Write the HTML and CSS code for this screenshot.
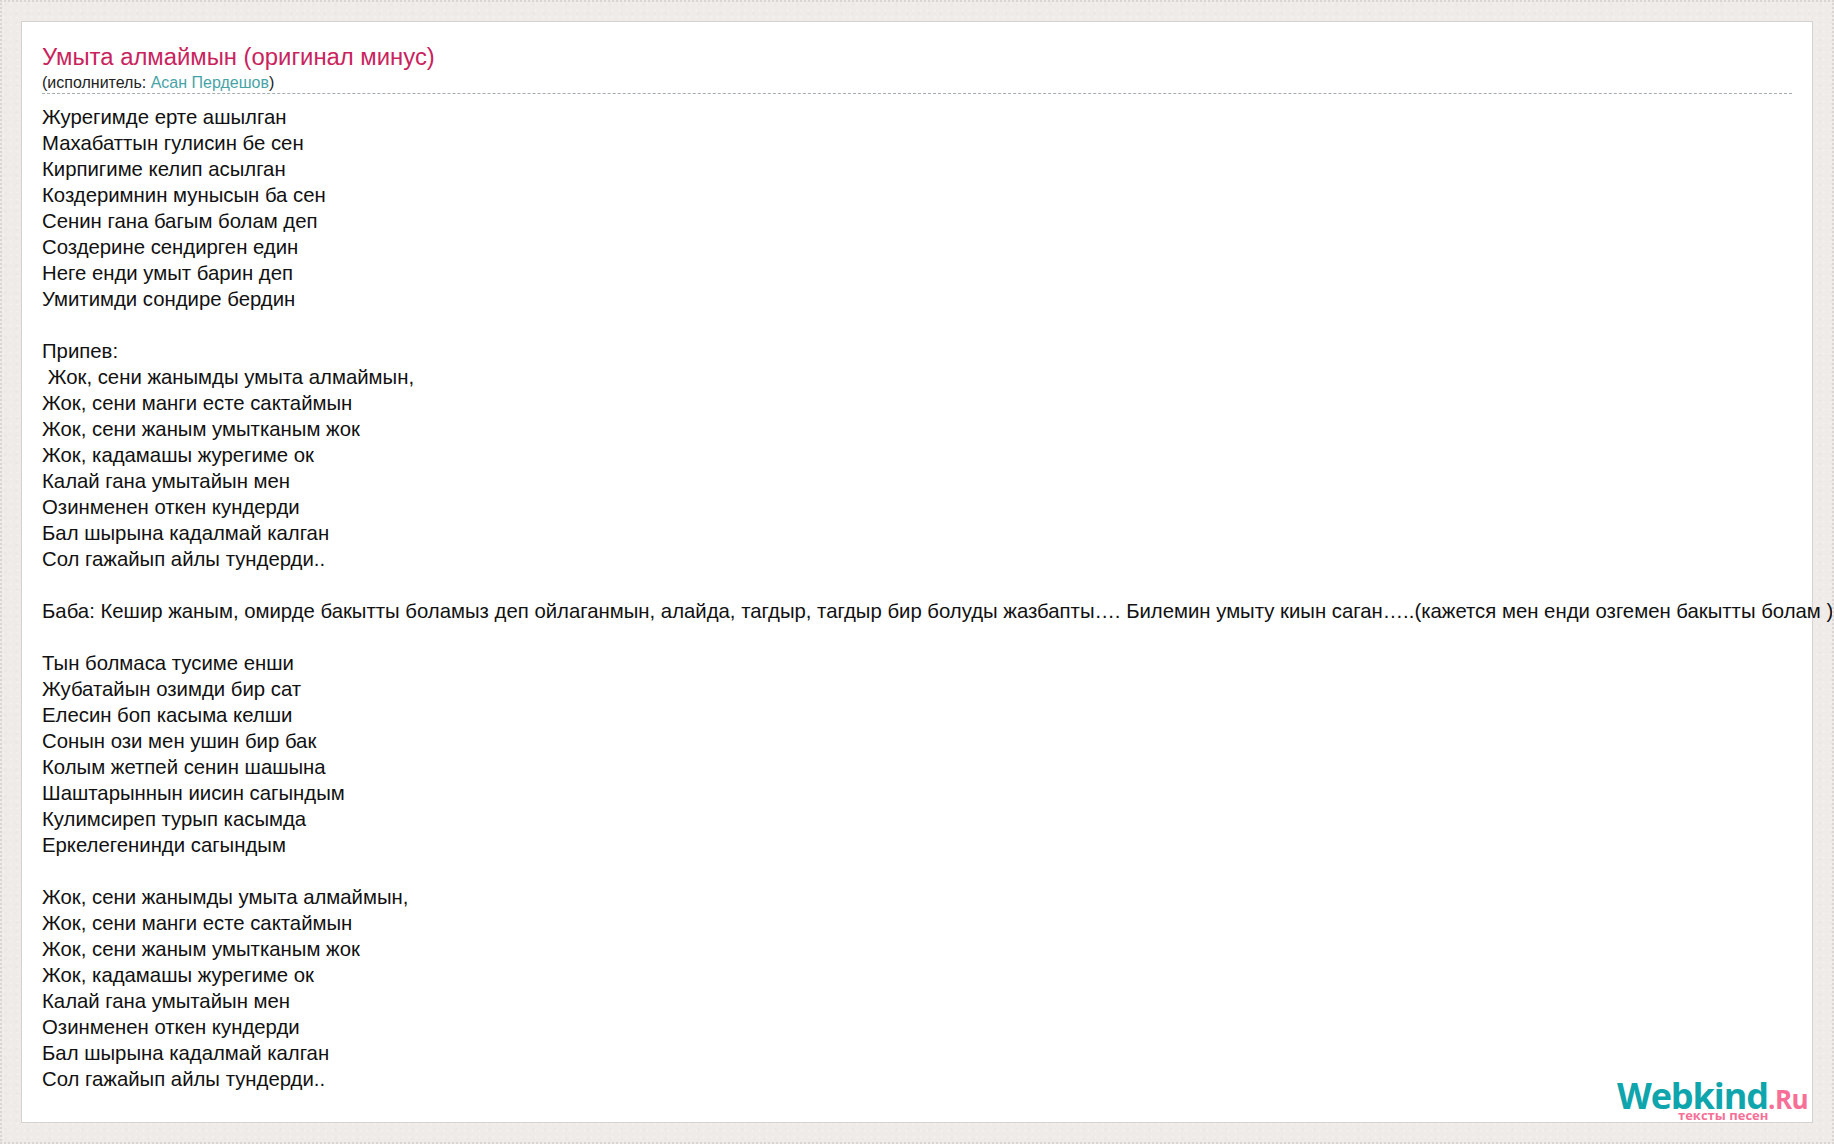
FILE: index.html
```
<!DOCTYPE html>
<html lang="kk">
<head>
<meta charset="utf-8">
<title>Умыта алмаймын (оригинал минус)</title>
<link rel="stylesheet" href="styles.css">
</head>
<body>
<main class="card">
<header class="head">
<h1 class="title">Умыта алмаймын (оригинал минус)</h1>
<div class="artist">(исполнитель: <a class="artist-link" href="#">Асан Пердешов</a>)</div>
</header>
<div class="lyrics">Журегимде ерте ашылган
Махабаттын гулисин бе сен
Кирпигиме келип асылган
Коздеримнин мунысын ба сен
Сенин гана багым болам деп
Создерине сендирген един
Неге енди умыт барин деп
Умитимди сондире бердин

Припев:
 Жок, сени жанымды умыта алмаймын,
Жок, сени манги есте сактаймын
Жок, сени жаным умытканым жок
Жок, кадамашы журегиме ок
Калай гана умытайын мен
Озинменен откен кундерди
Бал шырына кадалмай калган
Сол гажайып айлы тундерди..

Баба: Кешир жаным, омирде бакытты боламыз деп ойлаганмын, алайда, тагдыр, тагдыр бир болуды жазбапты…. Билемин умыту киын саган…..(кажется мен енди озгемен бакытты болам )

Тын болмаса тусиме енши
Жубатайын озимди бир сат
Елесин боп касыма келши
Сонын ози мен ушин бир бак
Колым жетпей сенин шашына
Шаштарыннын иисин сагындым
Кулимсиреп турып касымда
Еркелегенинди сагындым

Жок, сени жанымды умыта алмаймын,
Жок, сени манги есте сактаймын
Жок, сени жаным умытканым жок
Жок, кадамашы журегиме ок
Калай гана умытайын мен
Озинменен откен кундерди
Бал шырына кадалмай калган
Сол гажайып айлы тундерди..</div>
<div class="logo"><span class="logo-main">Webkind</span><span class="logo-ru">.Ru</span><span class="logo-sub">тексты песен</span></div>
</main>
</body>
</html>
```
FILE: styles.css
```
html, body {
  margin: 0;
  height: 100%;
}
body {
  box-sizing: border-box;
  height: 1144px;
  padding: 19px;
  border: 2px dotted #dad5d0;
  overflow: hidden;
  background-color: #efebe8;
  background-image:
    radial-gradient(circle, #f2efec 1px, transparent 1.5px),
    radial-gradient(circle, #ebe7e3 1px, transparent 1.5px);
  background-size: 7px 7px, 11px 9px;
  font-family: "Liberation Sans", Arial, sans-serif;
  color: #000;
}
.card {
  position: relative;
  box-sizing: border-box;
  height: 1102px;
  width: 1792px;
  background: #fff;
  border: 1px solid #d4d1ce;
  padding: 21px 20px 0 20px;
}
.head {
  border-bottom: 1px dashed #a3adb3;
  height: 51px;
  box-sizing: border-box;
}
.title {
  margin: 0;
  font-size: 23.85px;
  line-height: 28px;
  font-weight: normal;
  color: #c9235d;
}
.artist {
  font-size: 16px;
  line-height: 20px;
  margin-top: 2px;
  color: #222;
}
.artist-link {
  color: #48a3a8;
  text-decoration: none;
}
.lyrics {
  margin-top: 10px;
  font-size: 20.33px;
  line-height: 26px;
  white-space: pre;
  color: #111;
}
.logo {
  position: absolute;
  left: 1595px;
  top: 1046px;
  width: 190px;
  height: 54px;
  font-family: "Open Sans", sans-serif;
  font-weight: 700;
}
.logo-main {
  position: absolute;
  left: 0;
  top: 3px;
  font-size: 36px;
  line-height: 50px;
  letter-spacing: -1.1px;
  color: #0ea5ad;
}
.logo-ru {
  position: absolute;
  left: 151px;
  top: 11px;
  font-size: 26px;
  line-height: 40px;
  letter-spacing: -0.5px;
  color: #f76f97;
}
.logo-sub {
  position: absolute;
  left: 61px;
  top: 40px;
  font-size: 13px;
  line-height: 14px;
  color: #f76f97;
}
```
